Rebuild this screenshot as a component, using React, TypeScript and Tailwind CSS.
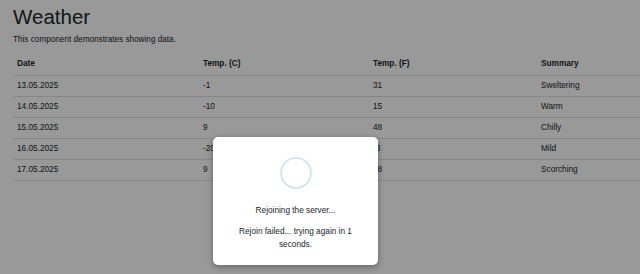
import React from "react";

const rows = [
  { date: "13.05.2025", c: "-1", f: "31", summary: "Sweltering" },
  { date: "14.05.2025", c: "-10", f: "15", summary: "Warm" },
  { date: "15.05.2025", c: "9", f: "48", summary: "Chilly" },
  { date: "16.05.2025", c: "-20", f: "-3", summary: "Mild" },
  { date: "17.05.2025", c: "9", f: "48", summary: "Scorching" },
];

const cols = "grid grid-cols-[186px_170px_168px_1fr]";

export default function App() {
  return (
    <div className="relative h-[274px] w-[640px] overflow-hidden bg-white font-['Liberation_Sans',Arial,sans-serif] text-[#212529]">
      <div className="pl-[13px] pt-[5px]">
        <h1 className="text-[20.5px] leading-[1.2]">Weather</h1>
        <p className="mt-[4px] text-[8.2px] leading-[1.5]">This component demonstrates showing data.</p>

        <div className="mt-[7px] text-[8.25px]">
          <div className={`${cols} h-[23px] items-center border-b border-[#dee2e6] font-bold`}>
            <div className="pl-1">Date</div>
            <div className="pl-1">Temp. (C)</div>
            <div className="pl-1">Temp. (F)</div>
            <div className="pl-1">Summary</div>
          </div>
          {rows.map((r) => (
            <div key={r.date} className={`${cols} h-[21px] items-center border-b border-[#dee2e6]`}>
              <div className="pl-1">{r.date}</div>
              <div className="pl-1">{r.c}</div>
              <div className="pl-1">{r.f}</div>
              <div className="pl-1">{r.summary}</div>
            </div>
          ))}
        </div>
      </div>

      {/* reconnect overlay */}
      <div className="absolute inset-0 bg-black/40" />
      <div className="absolute left-[213px] top-[137px] flex h-[128px] w-[165px] flex-col items-center rounded-[5px] bg-white px-4 pt-[20px] text-center text-[8.25px] text-[#212529] shadow-[0_2px_6px_rgba(0,0,0,0.35)]">
        <svg width="32" height="32" viewBox="0 0 32 32">
          <circle cx="16" cy="16" r="15" fill="none" stroke="#c6e2f5" strokeWidth="1.5" />
        </svg>
        <p className="mt-[16px] leading-[12px]">Rejoining the server...</p>
        <p className="mt-[8px] leading-[13px]">Rejoin failed... trying again in 1 seconds.</p>
      </div>
    </div>
  );
}
